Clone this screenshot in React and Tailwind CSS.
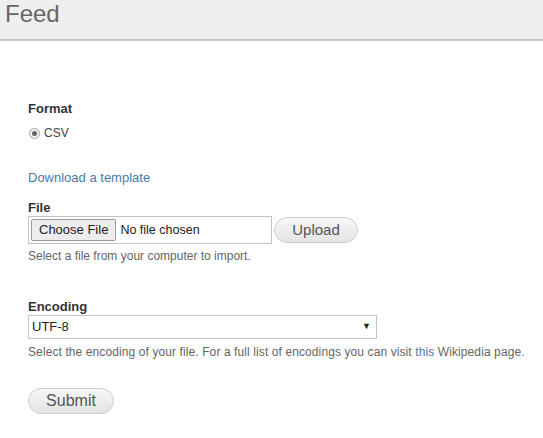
export default function App() {
  return (
    <div className="min-h-[438px] bg-white font-['Liberation_Sans',Arial,sans-serif] text-[13px] text-[#333]">
      <div className="h-[41px] border-b-2 border-[#c8c8c8] bg-[#efefef] pl-[5px]">
        <h1 className="text-[24px] leading-[28px] text-[#666]">Feed</h1>
      </div>

      <div className="px-[28px] pt-[60px]">
        <div className="text-[13px] font-bold leading-[16px] text-[#333]">Format</div>
        <div className="mt-[9px] flex items-center gap-[4px] pl-[1px]">
          <span className="flex h-[11px] w-[11px] items-center justify-center rounded-full border border-[#a6a6a6] bg-[#f2f2f2]">
            <span className="h-[5px] w-[5px] rounded-full bg-[#666]" />
          </span>
          <span className="text-[12px] leading-[14px] text-[#444]">CSV</span>
        </div>

        <a href="#" className="mt-[31px] block text-[13px] leading-[14px] text-[#4c7aa3]">
          Download a template
        </a>

        <div className="mt-[15px] text-[13px] font-bold leading-[16px] text-[#333]">File</div>
        <div className="mt-0 flex items-center gap-[2px]">
          <div className="flex h-[28px] w-[244px] items-center border border-[#c3c3c3] bg-white pl-[2px]">
            <div className="flex h-[22px] items-center rounded-[2px] border border-[#9a9a9a] bg-[#ededed] px-[7px] text-[13px] text-[#222]">
              Choose File
            </div>
            <span className="ml-[4px] text-[12.5px] text-[#222]">No file chosen</span>
          </div>
          <div className="flex h-[26px] w-[84px] items-center justify-center rounded-full border border-[#ccc] bg-gradient-to-b from-[#f7f7f7] to-[#e4e4e4] text-[15px] text-[#555]">
            Upload
          </div>
        </div>
        <p className="mt-[5px] text-[12px] leading-[14px] text-[#666]">
          Select a file from your computer to import.
        </p>

        <div className="mt-[36px] text-[13px] font-bold leading-[16px] text-[#333]">Encoding</div>
        <div className="mt-0 flex h-[24px] w-[349px] items-center justify-between border border-[#c3c3c3] bg-white pl-[3px] pr-[5px]">
          <span className="text-[13px] text-[#222]">UTF-8</span>
          <span className="text-[9px] text-[#222]">▼</span>
        </div>
        <p className="mt-[6px] whitespace-nowrap text-[12px] leading-[14px] tracking-[0.1px] text-[#666]">
          Select the encoding of your file. For a full list of encodings you can visit{" "}
          <a href="#" className="text-[#4c7aa3]">this</a> Wikipedia page.
        </p>

        <div className="mt-[29px] flex h-[26px] w-[86px] items-center justify-center rounded-full border border-[#ccc] bg-gradient-to-b from-[#f7f7f7] to-[#e4e4e4] text-[16px] text-[#555]">
          Submit
        </div>
      </div>
    </div>
  );
}
